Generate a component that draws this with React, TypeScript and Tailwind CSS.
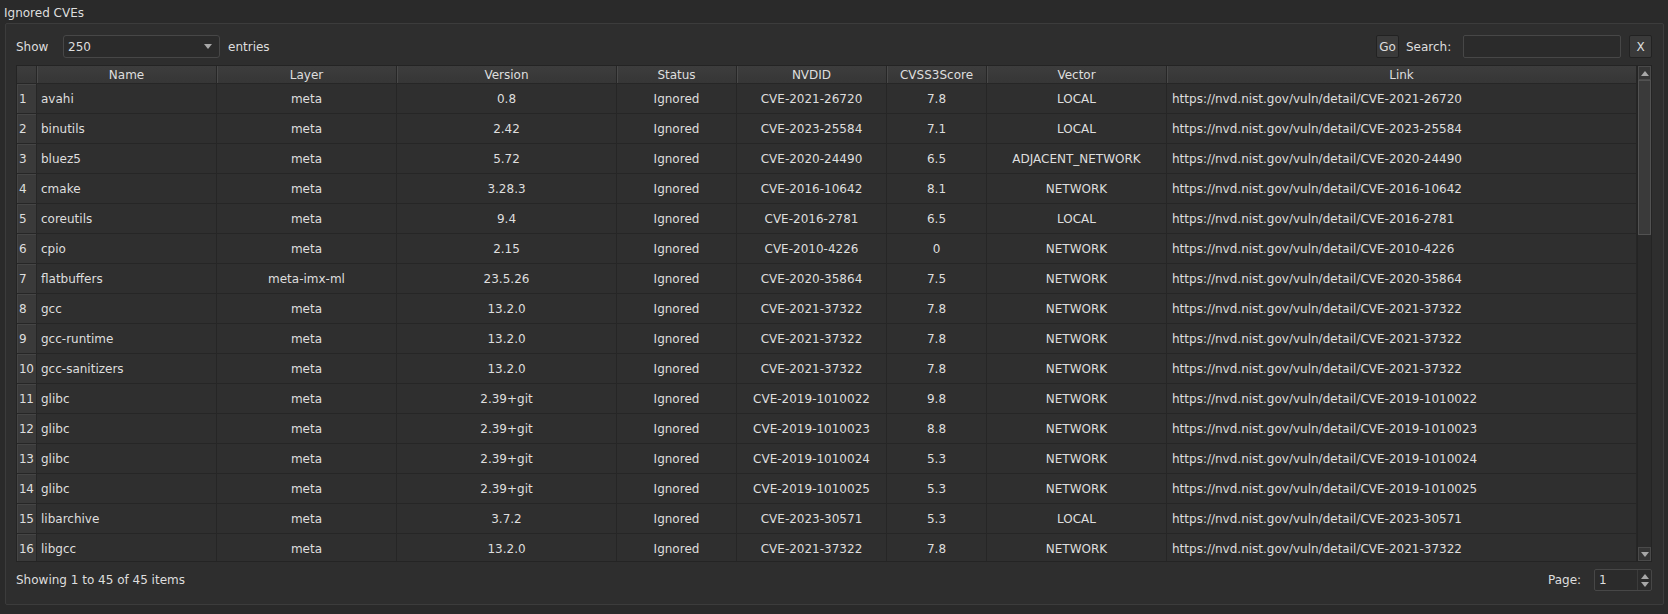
import React from "react";

interface Cve {
  name: string;
  layer: string;
  version: string;
  nvdid: string;
  score: string;
  vector: string;
}

const rows: Cve[] = [
  { name: "avahi", layer: "meta", version: "0.8", nvdid: "CVE-2021-26720", score: "7.8", vector: "LOCAL" },
  { name: "binutils", layer: "meta", version: "2.42", nvdid: "CVE-2023-25584", score: "7.1", vector: "LOCAL" },
  { name: "bluez5", layer: "meta", version: "5.72", nvdid: "CVE-2020-24490", score: "6.5", vector: "ADJACENT_NETWORK" },
  { name: "cmake", layer: "meta", version: "3.28.3", nvdid: "CVE-2016-10642", score: "8.1", vector: "NETWORK" },
  { name: "coreutils", layer: "meta", version: "9.4", nvdid: "CVE-2016-2781", score: "6.5", vector: "LOCAL" },
  { name: "cpio", layer: "meta", version: "2.15", nvdid: "CVE-2010-4226", score: "0", vector: "NETWORK" },
  { name: "flatbuffers", layer: "meta-imx-ml", version: "23.5.26", nvdid: "CVE-2020-35864", score: "7.5", vector: "NETWORK" },
  { name: "gcc", layer: "meta", version: "13.2.0", nvdid: "CVE-2021-37322", score: "7.8", vector: "NETWORK" },
  { name: "gcc-runtime", layer: "meta", version: "13.2.0", nvdid: "CVE-2021-37322", score: "7.8", vector: "NETWORK" },
  { name: "gcc-sanitizers", layer: "meta", version: "13.2.0", nvdid: "CVE-2021-37322", score: "7.8", vector: "NETWORK" },
  { name: "glibc", layer: "meta", version: "2.39+git", nvdid: "CVE-2019-1010022", score: "9.8", vector: "NETWORK" },
  { name: "glibc", layer: "meta", version: "2.39+git", nvdid: "CVE-2019-1010023", score: "8.8", vector: "NETWORK" },
  { name: "glibc", layer: "meta", version: "2.39+git", nvdid: "CVE-2019-1010024", score: "5.3", vector: "NETWORK" },
  { name: "glibc", layer: "meta", version: "2.39+git", nvdid: "CVE-2019-1010025", score: "5.3", vector: "NETWORK" },
  { name: "libarchive", layer: "meta", version: "3.7.2", nvdid: "CVE-2023-30571", score: "5.3", vector: "LOCAL" },
  { name: "libgcc", layer: "meta", version: "13.2.0", nvdid: "CVE-2021-37322", score: "7.8", vector: "NETWORK" },
];

const headCell = "h-full flex items-center justify-center border-r border-[#262626] shadow-[inset_1px_0_0_#4a4a4a]";
const cell = "h-full flex items-center justify-center border-r border-[#262626]";

const Triangle = ({ up }: { up?: boolean }) => (
  <svg width="8" height="5" viewBox="0 0 8 5" className="block">
    <path d={up ? "M0 5 L4 0 L8 5 Z" : "M0 0 L8 0 L4 5 Z"} fill="#a8a8a8" />
  </svg>
);

const App = () => {
  return (
    <div
      className="w-[1668px] h-[614px] bg-[#2a2a2a] text-[#dedede] text-[12px] overflow-hidden"
      style={{ fontFamily: '"DejaVu Sans", "Liberation Sans", sans-serif' }}
    >
      {/* Title */}
      <div className="h-[23px] pl-[4px] pt-[4px] leading-[18px]">Ignored CVEs</div>

      {/* Group box */}
      <div className="ml-[5px] w-[1659px] h-[582px] border border-[#3c3c3c] rounded-[2px] bg-[#2e2e2e] pt-[11px] pl-[10px] pr-[10px] flex flex-col">
        {/* Controls */}
        <div className="h-[23px] flex items-center">
          <span className="w-[47px]">Show</span>
          <div className="w-[157px] h-[23px] border border-[#474747] rounded-[3px] bg-[#2b2b2b] flex items-center justify-between pl-[4px] pr-[7px]">
            <span>250</span>
            <Triangle />
          </div>
          <span className="ml-[8px]">entries</span>
          <div className="flex-1" />
          <button className="w-[23px] h-[23px] border border-[#222] rounded-[2px] bg-[#3a3a3a] flex items-center justify-center text-[#dedede]">
            Go
          </button>
          <span className="ml-[7px] w-[57px]">Search:</span>
          <div className="w-[158px] h-[23px] border border-[#474747] rounded-[2px] bg-[#2b2b2b]" />
          <button className="ml-[8px] w-[23px] h-[23px] border border-[#222] rounded-[2px] bg-[#3a3a3a] flex items-center justify-center text-[#dedede]">
            X
          </button>
          <div className="w-[1px]" />
        </div>

        {/* Table */}
        <div className="mt-[7px] w-[1636px] h-[497px] border border-[#242424] flex bg-[#2f2f2f]">
          <div className="w-[1620px] flex flex-col overflow-hidden">
            {/* Header */}
            <div className="h-[18px] shrink-0 flex bg-gradient-to-b from-[#3d3d3d] to-[#363636] border-b border-[#262626]">
              <div className="w-[20px] h-full border-r border-[#262626]" />
              <div className={`w-[180px] ${headCell}`}>Name</div>
              <div className={`w-[180px] ${headCell}`}>Layer</div>
              <div className={`w-[220px] ${headCell}`}>Version</div>
              <div className={`w-[120px] ${headCell}`}>Status</div>
              <div className={`w-[150px] ${headCell}`}>NVDID</div>
              <div className={`w-[100px] ${headCell}`}>CVSS3Score</div>
              <div className={`w-[180px] ${headCell}`}>Vector</div>
              <div className={`w-[470px] ${headCell}`}>Link</div>
            </div>
            {/* Body */}
            <div className="flex-1 overflow-hidden">
              {rows.map((r, i) => (
                <div key={i} className="h-[30px] flex border-b border-[#262626]">
                  <div className="w-[20px] h-full flex items-center pl-[2px] bg-[#3a3a3a] border-r border-[#262626] shadow-[inset_1px_1px_0_#454545] tracking-[-0.5px] whitespace-nowrap">
                    {i + 1}
                  </div>
                  <div className="w-[180px] h-full flex items-center pl-[4px] border-r border-[#262626] whitespace-nowrap">
                    {r.name}
                  </div>
                  <div className={`w-[180px] ${cell}`}>{r.layer}</div>
                  <div className={`w-[220px] ${cell}`}>{r.version}</div>
                  <div className={`w-[120px] ${cell}`}>Ignored</div>
                  <div className={`w-[150px] ${cell}`}>{r.nvdid}</div>
                  <div className={`w-[100px] ${cell}`}>{r.score}</div>
                  <div className={`w-[180px] ${cell}`}>{r.vector}</div>
                  <div className="w-[470px] h-full flex items-center pl-[5px] border-r border-[#262626] whitespace-nowrap">
                    https://nvd.nist.gov/vuln/detail/{r.nvdid}
                  </div>
                </div>
              ))}
            </div>
          </div>

          {/* Scrollbar */}
          <div className="w-[14px] h-full flex flex-col border-l border-[#242424] bg-[#2b2b2b]">
            <div className="h-[14px] shrink-0 border border-[#4a4a4a] bg-[#353535] flex items-center justify-center">
              <Triangle up />
            </div>
            <div className="flex-1">
              <div className="h-[155px] border border-[#525252] bg-[#3a3a3a]" />
            </div>
            <div className="h-[14px] shrink-0 border border-[#4a4a4a] bg-[#353535] flex items-center justify-center">
              <Triangle />
            </div>
          </div>
        </div>

        {/* Footer */}
        <div className="mt-[7px] h-[22px] flex items-center">
          <span>Showing 1 to 45 of 45 items</span>
          <div className="flex-1" />
          <span className="w-[46px]">Page:</span>
          <div className="w-[58px] h-[22px] border border-[#474747] rounded-[2px] bg-[#2b2b2b] flex items-center">
            <span className="flex-1 pl-[4px]">1</span>
            <div className="w-[14px] h-full flex flex-col items-center justify-center gap-[3px] border-l border-[#3c3c3c]">
              <Triangle up />
              <Triangle />
            </div>
          </div>
          <div className="w-[1px]" />
        </div>
      </div>
    </div>
  );
};

export default App;
